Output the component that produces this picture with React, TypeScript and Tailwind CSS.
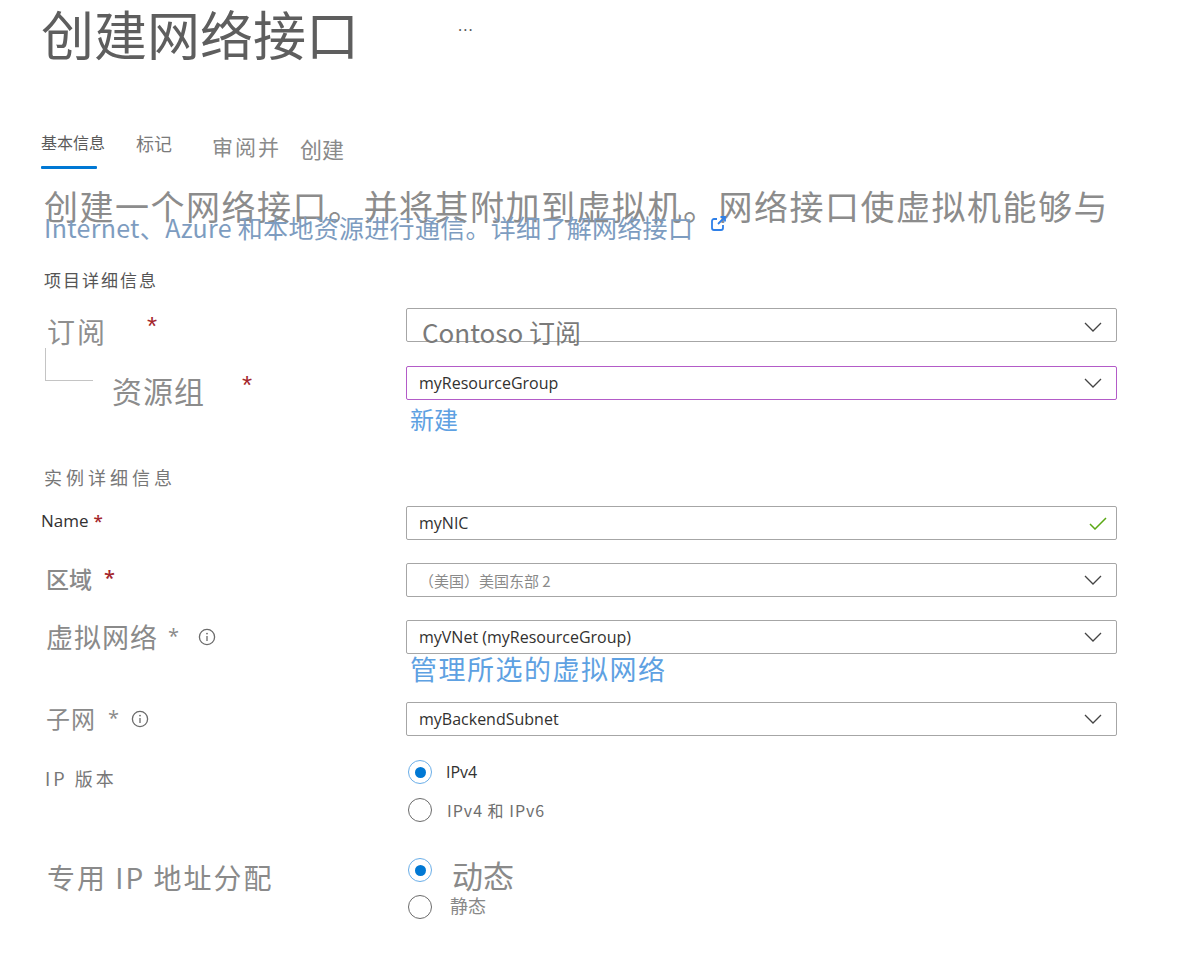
import React from "react";

const latin = "font-['Open_Sans','Noto_Sans_CJK_SC',sans-serif]";

function Chevron() {
  return (
    <svg width="18" height="10" viewBox="0 0 18 10" fill="none" className="shrink-0 block">
      <path d="M1 1l8 8 8-8" stroke="#444" strokeWidth="1.3" />
    </svg>
  );
}

function Check() {
  return (
    <svg width="18" height="13" viewBox="0 0 18 13" fill="none" className="shrink-0 block">
      <path d="M1 7l5 5L17 1" stroke="#5aa814" strokeWidth="1.5" />
    </svg>
  );
}

function Info() {
  return (
    <svg width="18" height="18" viewBox="0 0 18 18" fill="none" className="shrink-0 block">
      <circle cx="9" cy="9" r="7.6" stroke="#6b6b6b" strokeWidth="1.3" />
      <circle cx="9" cy="5.6" r="0.9" fill="#6b6b6b" />
      <path d="M9 8v5" stroke="#6b6b6b" strokeWidth="1.3" />
    </svg>
  );
}

function ExternalLink() {
  return (
    <svg width="18" height="18" viewBox="0 0 18 18" fill="none" className="shrink-0 block">
      <path
        d="M8 4H5a2 2 0 0 0-2 2v7a2 2 0 0 0 2 2h7a2 2 0 0 0 2-2v-3"
        stroke="#2f80e8"
        strokeWidth="1.8"
      />
      <path d="M9 9l7-7M11.5 2H16v4.5" stroke="#2f80e8" strokeWidth="1.8" />
    </svg>
  );
}

function Radio({ checked }: { checked?: boolean }) {
  return checked ? (
    <div className="w-[24px] h-[24px] shrink-0 rounded-full border-[1.5px] border-[#6aaee8] flex items-center justify-center">
      <div className="w-[11px] h-[11px] rounded-full bg-[#0078d4]" />
    </div>
  ) : (
    <div className="w-[24px] h-[24px] shrink-0 rounded-full border border-[#6b6b6b]" />
  );
}

function Box({
  children,
  purple,
}: {
  children: React.ReactNode;
  purple?: boolean;
}) {
  return (
    <div
      className={
        purple
          ? "w-[711px] h-[34px] shrink-0 border border-[#b35bc8] rounded-[2px] flex items-center justify-between pl-[12px] pr-[14px]"
          : "w-[711px] h-[34px] shrink-0 border border-[#a6a6a6] rounded-[2px] flex items-center justify-between pl-[12px] pr-[14px]"
      }
    >
      {children}
    </div>
  );
}

export default function App() {
  return (
    <div className="w-[1200px] h-[965px] overflow-hidden bg-white font-['Noto_Sans_CJK_SC',sans-serif]">
      {/* Header */}
      <div className="h-[100px] flex items-start pl-[41px]">
        <h1 className="mt-[3px] text-[53px] leading-[61px] text-[#5e5e5e] font-normal whitespace-nowrap">
          创建网络接口
        </h1>
        <span className={`block ml-[99px] mt-[17px] text-[16px] leading-[16px] text-[#555] tracking-[1px] ${latin}`}>
          ...
        </span>
      </div>

      {/* Tabs */}
      <div className="h-[70px] flex items-start pl-[41px]">
        <div className="flex flex-col">
          <span className="block mt-[34px] text-[16px] leading-[16px] text-[#5a5a5a]">基本信息</span>
          <div className="mt-[16px] h-[3px] w-[56px] bg-[#0078d4] rounded-[1px]" />
        </div>
        <span className="block ml-[31px] mt-[34px] text-[18px] leading-[18px] text-[#7a7a7a]">标记</span>
        <span className="block ml-[40px] mt-[36px] text-[21px] leading-[21px] tracking-[2px] text-[#8a8a8a]">
          审阅并
        </span>
        <span className="block ml-[19px] mt-[37px] text-[22px] leading-[22px] text-[#8a8a8a]">创建</span>
      </div>

      {/* Description */}
      <p className="mt-[19px] pl-[44px] text-[34px] leading-[34px] tracking-[1.5px] text-[#8c8c8c] whitespace-nowrap">
        创建一个网络接口。并将其附加到虚拟机。网络接口使虚拟机能够与
      </p>
      <div className="-mt-[8px] pl-[44px] flex items-start">
        <span className="block text-[25px] leading-[25px] tracking-[0.3px] text-[#7d9cc0] whitespace-nowrap">
          Internet、Azure 和本地资源进行通信。详细了解网络接口
        </span>
        <span className="block ml-[16px] mt-[0px]">
          <ExternalLink />
        </span>
      </div>

      {/* Project details */}
      <p className="mt-[31px] pl-[44px] text-[17px] leading-[17px] tracking-[2px] text-[#555]">
        项目详细信息
      </p>

      {/* Subscription */}
      <div className="mt-[20px] flex items-start h-[34px]">
        <div className="w-[406px] shrink-0 flex items-start pl-[47px]">
          <span className="block mt-[9px] text-[28px] leading-[28px] tracking-[2px] text-[#8f8f8f]">订阅</span>
          <span className="block ml-[40px] mt-[5px] text-[26px] leading-[26px] text-[#a4262c] font-['Liberation_Sans',sans-serif]">
            *
          </span>
        </div>
        <div className="w-[711px] h-[34px] shrink-0 border border-[#a6a6a6] rounded-[2px] flex items-start justify-between pl-[15px] pr-[14px]">
          <span className="block mt-[10px] text-[26px] leading-[26px] text-[#7a7a7a] whitespace-nowrap">
            Contoso 订阅
          </span>
          <span className="block mt-[13px]">
            <Chevron />
          </span>
        </div>
      </div>

      {/* Resource group */}
      <div className="mt-[24px] flex items-start h-[34px]">
        <div className="w-[406px] shrink-0 flex items-start pl-[45px]">
          <div className="-mt-[18px] w-[48px] h-[33px] shrink-0 border-l border-b border-[#c4c4c4]" />
          <span className="block ml-[19px] mt-[9px] text-[30px] leading-[30px] tracking-[1px] text-[#8c8c8c]">
            资源组
          </span>
          <span className="block ml-[37px] mt-[6px] text-[26px] leading-[26px] text-[#a4262c] font-['Liberation_Sans',sans-serif]">
            *
          </span>
        </div>
        <Box purple>
          <span className={`block text-[16px] leading-[16px] text-[#323130] ${latin}`}>myResourceGroup</span>
          <Chevron />
        </Box>
      </div>
      <div className="pl-[410px] mt-[7px]">
        <span className="block text-[24px] leading-[24px] text-[#5ea1e2]">新建</span>
      </div>

      {/* Instance details */}
      <p className="mt-[37px] pl-[44px] text-[18px] leading-[18px] tracking-[4px] text-[#777]">
        实例详细信息
      </p>

      {/* Name */}
      <div className="mt-[20px] flex items-start h-[34px]">
        <div className="w-[406px] shrink-0 flex items-start pl-[41px]">
          <span className={`block mt-[6px] text-[17px] leading-[17px] text-[#323130] ${latin}`}>Name</span>
          <span className={`block ml-[5px] mt-[6px] text-[17px] leading-[17px] text-[#a4262c] font-semibold ${latin}`}>
            *
          </span>
        </div>
        <Box>
          <span className={`block text-[16px] leading-[16px] text-[#323130] ${latin}`}>myNIC</span>
          <span className="block mr-[-5px]">
            <Check />
          </span>
        </Box>
      </div>

      {/* Region */}
      <div className="mt-[23px] flex items-start h-[34px]">
        <div className="w-[406px] shrink-0 flex items-start pl-[46px]">
          <span className="block mt-[4px] text-[23px] leading-[23px] font-medium text-[#8a8a8a]">区域</span>
          <span className={`block ml-[12px] mt-[5px] text-[20px] leading-[20px] text-[#a4262c] font-semibold ${latin}`}>
            *
          </span>
        </div>
        <Box>
          <span className="block text-[15px] leading-[15px] text-[#8a8a8a] whitespace-nowrap">（美国）美国东部 2</span>
          <Chevron />
        </Box>
      </div>

      {/* Virtual network */}
      <div className="mt-[23px] flex items-start h-[34px]">
        <div className="w-[406px] shrink-0 flex items-start pl-[46px]">
          <span className="block mt-[3px] text-[27px] leading-[27px] tracking-[1px] text-[#8a8a8a]">虚拟网络</span>
          <span className={`block ml-[10px] mt-[6px] text-[20px] leading-[20px] text-[#8a8a8a] ${latin}`}>*</span>
          <span className="block ml-[19px] mt-[8px]">
            <Info />
          </span>
        </div>
        <Box>
          <span className={`block text-[16px] leading-[16px] text-[#323130] ${latin}`}>myVNet (myResourceGroup)</span>
          <Chevron />
        </Box>
      </div>
      <div className="pl-[410px] mt-[1px]">
        <span className="block text-[27px] leading-[27px] tracking-[1.5px] text-[#5ea1e2]">管理所选的虚拟网络</span>
      </div>

      {/* Subnet */}
      <div className="mt-[20px] flex items-start h-[34px]">
        <div className="w-[406px] shrink-0 flex items-start pl-[46px]">
          <span className="block mt-[4px] text-[24px] leading-[24px] tracking-[1px] text-[#8a8a8a]">子网</span>
          <span className={`block ml-[12px] mt-[6px] text-[20px] leading-[20px] text-[#8a8a8a] ${latin}`}>*</span>
          <span className="block ml-[12px] mt-[8px]">
            <Info />
          </span>
        </div>
        <Box>
          <span className={`block text-[16px] leading-[16px] text-[#323130] ${latin}`}>myBackendSubnet</span>
          <Chevron />
        </Box>
      </div>

      {/* IP version */}
      <div className="mt-[24px] flex items-start">
        <div className="w-[406px] shrink-0 pl-[45px]">
          <span className="block mt-[9px] text-[18px] leading-[18px] tracking-[3px] text-[#777]">IP 版本</span>
        </div>
        <div className="ml-[2px] flex flex-col">
          <div className="flex items-center">
            <Radio checked />
            <span className={`block ml-[14px] text-[16px] leading-[16px] text-[#323130] ${latin}`}>IPv4</span>
          </div>
          <div className="mt-[14px] flex items-center">
            <Radio />
            <span className="block ml-[15px] text-[16px] leading-[16px] tracking-[1px] text-[#6e6e6e] whitespace-nowrap">
              IPv4 和 IPv6
            </span>
          </div>
        </div>
      </div>

      {/* Private IP allocation */}
      <div className="mt-[36px] flex items-start">
        <div className="w-[406px] shrink-0 pl-[47px]">
          <span className="block mt-[5px] text-[28px] leading-[28px] tracking-[2px] text-[#8a8a8a] whitespace-nowrap">
            专用 IP 地址分配
          </span>
        </div>
        <div className="ml-[2px] flex flex-col">
          <div className="flex items-start">
            <Radio checked />
            <span className="block ml-[20px] mt-[1px] text-[31px] leading-[31px] text-[#8a8a8a]">动态</span>
          </div>
          <div className="mt-[5px] flex items-start">
            <Radio />
            <span className="block ml-[18px] mt-[1px] text-[18px] leading-[18px] text-[#888]">静态</span>
          </div>
        </div>
      </div>
    </div>
  );
}
